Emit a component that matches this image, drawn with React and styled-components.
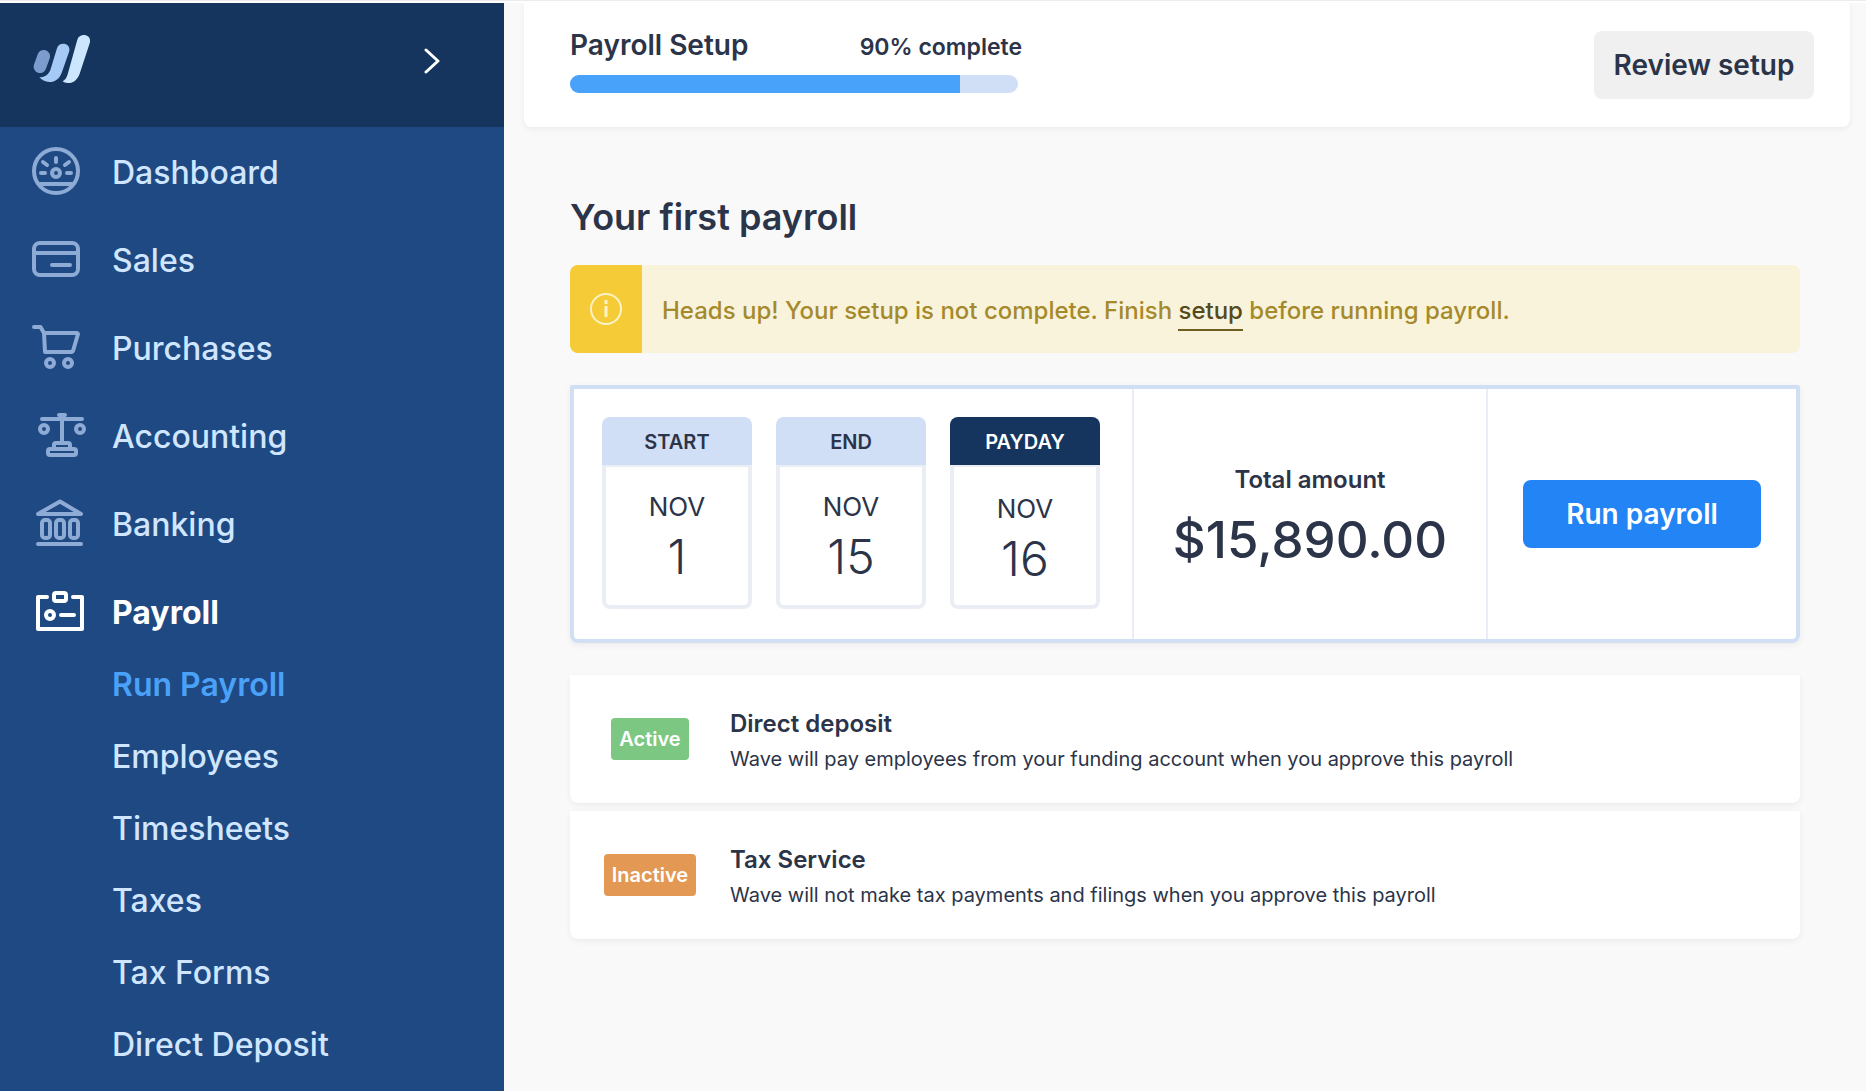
import React from 'react'
import styled, { createGlobalStyle } from 'styled-components'

const GlobalStyle = createGlobalStyle`
    * {
        box-sizing: border-box;
    }
    body {
        margin: 0;
        background: #f9f9f9;
        color: #2b3448;
        font-family: Inter, 'Liberation Sans', sans-serif;
    }
    h1, h2, p, ul {
        margin: 0;
        padding: 0;
    }
    ul {
        list-style: none;
    }
    button {
        font-family: inherit;
        cursor: pointer;
    }
`

const Page = styled.div`
    display: flex;
    min-height: 100vh;
    border-top: 1px solid #ececee;
    padding-top: 2px;
    background: linear-gradient(#ffffff 2px, #f9f9f9 2px);
`

const Sidebar = styled.aside`
    flex: 0 0 504px;
    background: #1f4983;
`

const SidebarHeader = styled.div`
    display: flex;
    align-items: center;
    justify-content: space-between;
    padding: 29px 64px 37px 32px;
    background: #15355f;
`

const ExpandButton = styled.button`
    display: flex;
    padding: 0;
    border: 0;
    background: none;
    color: #ffffff;
`

const Nav = styled.nav`
    padding-top: 1px;
`

const NavLink = styled.a`
    display: flex;
    align-items: center;
    gap: 24px;
    height: 88px;
    padding-left: 32px;
    font-size: 32px;
    font-weight: ${props => (props.$active ? 700 : 500)};
    color: ${props => (props.$active ? '#ffffff' : '#d0e6ff')};
    text-decoration: none;
    svg {
        color: ${props => (props.$active ? '#ffffff' : '#8eabd6')};
    }
`

const SubLink = styled.a`
    display: flex;
    align-items: center;
    height: 72px;
    padding-left: 112px;
    font-size: 32px;
    font-weight: ${props => (props.$active ? 600 : 500)};
    color: ${props => (props.$active ? '#4aa2f8' : '#d0e6ff')};
    text-decoration: none;
`

const SubNav = styled.ul`
    margin-top: -8px;
`

const Main = styled.main`
    flex: 1;
    min-width: 0;
`

const SetupBar = styled.header`
    display: flex;
    align-items: flex-start;
    justify-content: space-between;
    margin: 0 16px 0 20px;
    padding: 28px 36px 28px 46px;
    background: #ffffff;
    border-radius: 0 0 8px 8px;
    box-shadow: 0 2px 6px rgba(0, 0, 0, 0.06);
`

const SetupProgress = styled.div`
    width: 452px;
`

const SetupText = styled.div`
    display: flex;
    align-items: baseline;
    justify-content: space-between;
    height: 28px;
    margin-bottom: 16px;
    line-height: 28px;
`

const SetupTitle = styled.h2`
    font-size: 28px;
    font-weight: 600;
`

const SetupPercent = styled.span`
    font-size: 23px;
    font-weight: 600;
`

const Track = styled.div`
    width: 448px;
    height: 18px;
    border-radius: 9px;
    overflow: hidden;
    background: #d0dff6;
`

const Fill = styled.div`
    height: 100%;
    background: #48a2f9;
`

const Button = styled.button`
    height: 68px;
    padding: 0;
    width: ${props => (props.$primary ? '238px' : '220px')};
    border: 0;
    border-radius: 8px;
    background: ${props => (props.$primary ? '#2284f5' : '#f0f0f1')};
    color: ${props => (props.$primary ? '#ffffff' : '#2b3448')};
    font-size: 28px;
    font-weight: 600;
`

const Content = styled.div`
    padding: 66px 66px 40px;
`

const Title = styled.h1`
    font-size: 36px;
    font-weight: 600;
    line-height: 48px;
    margin-bottom: 24px;
`

const Alert = styled.div`
    display: flex;
    height: 88px;
    margin-bottom: 32px;
    border-radius: 8px;
    overflow: hidden;
    background: #f9f3dc;
`

const AlertIcon = styled.div`
    display: flex;
    align-items: center;
    justify-content: center;
    width: 72px;
    background: #f5cb37;
`

const AlertText = styled.p`
    padding-left: 20px;
    font-size: 24px;
    font-weight: 500;
    line-height: 92px;
    color: #a58a2c;
    a {
        padding-bottom: 4px;
        border-bottom: 2px solid #6e5e20;
        color: #564a1a;
        text-decoration: none;
    }
`

const PayrollCard = styled.section`
    display: grid;
    grid-template-columns: 560px 354px 1fr;
    margin-bottom: 32px;
    border: 4px solid #d0dff3;
    border-radius: 2px 2px 8px 8px;
    background: #ffffff;
    box-shadow: 0 2px 6px rgba(0, 0, 0, 0.06);
`

const Cell = styled.div`
    display: flex;
    flex-direction: column;
    align-items: center;
    justify-content: center;
    border-right: 2px solid #e9edf5;
    &:last-child {
        border-right: 0;
    }
`

const Dates = styled(Cell)`
    flex-direction: row;
    justify-content: flex-start;
    gap: 24px;
    padding: 28px 28px 30px;
`

const Total = styled(Cell)`
    padding-top: 12px;
`

const DateCard = styled.div`
    width: 150px;
    height: 192px;
    text-align: center;
`

const DateHead = styled.div`
    padding-top: 2px;
    border-radius: 8px 8px 0 0;
    background: ${props => (props.$dark ? '#15355f' : '#d0dff6')};
    color: ${props => (props.$dark ? '#ffffff' : '#2b3448')};
    font-size: 20px;
    font-weight: 600;
    line-height: 46px;
`

const DateBody = styled.div`
    height: 144px;
    padding-top: ${props => (props.$dark ? '22px' : '20px')};
    border: 4px solid #eaedf4;
    border-top-width: 2px;
    border-radius: 0 0 8px 8px;
`

const Month = styled.div`
    font-size: 26px;
    line-height: 40px;
`

const Day = styled.div`
    font-size: 48px;
    font-weight: 300;
    line-height: 60px;
`

const TotalLabel = styled.div`
    font-size: 24px;
    font-weight: 600;
    line-height: 40px;
`

const TotalAmount = styled.div`
    font-size: 51px;
    font-weight: 500;
    line-height: 80px;
`

const Services = styled.ul`
    display: flex;
    flex-direction: column;
    gap: 8px;
`

const Service = styled.li`
    display: flex;
    align-items: center;
    height: 128px;
    border-radius: 0 0 8px 8px;
    background: #ffffff;
    box-shadow: 0 2px 6px rgba(0, 0, 0, 0.06);
`

const BadgeBox = styled.div`
    display: flex;
    justify-content: center;
    width: 160px;
`

const Badge = styled.span`
    padding: 0 8px;
    border-radius: 4px;
    background: ${props => (props.$on ? '#7cc883' : '#e39853')};
    color: #ffffff;
    font-size: 20px;
    font-weight: 600;
    line-height: 42px;
`

const ServiceText = styled.div`
    padding-top: 4px;
`

const ServiceName = styled.h2`
    font-size: 24px;
    font-weight: 600;
    line-height: 36px;
`

const ServiceNote = styled.p`
    font-size: 20px;
    line-height: 34px;
`

const Icon = ({ children }) => (
    <svg width="56" height="56" viewBox="0 0 56 56" fill="none" stroke="currentColor"
        strokeWidth="4" strokeLinecap="round" strokeLinejoin="round" aria-hidden="true">
        {children}
    </svg>
)

const Logo = () => (
    <svg width="60" height="58" viewBox="96 96 180 174" aria-hidden="true">
        <path d="M131 169L120 200" stroke="#7c9ccd" strokeWidth="38" strokeLinecap="round" />
        <path fill="#a6caf6" d="M171 145C177 124 212 128 208 153L186 216C178 240 161 247 148 246C135 245 125 240 118 232C136 232 148 221 152 207Z" />
        <path fill="#cce6fd" d="M232 119C238 98 274 101 270 127L239 221C232 240 219 250 203 249C197 249 192 247 188 244C196 240 200 233 203 223Z" />
    </svg>
)

const nav = [
    {
        label: 'Dashboard',
        icon: (
            <Icon>
                <circle cx="24" cy="27" r="22" />
                <circle cx="24" cy="29" r="4" />
                <path d="M24 14v4M9 29h4M35 29h4M11 18l4 3M37 18l-4 3M7 40h34" />
            </Icon>
        ),
    },
    {
        label: 'Sales',
        icon: (
            <Icon>
                <rect x="2" y="11" width="44" height="32" rx="6" />
                <path d="M2 21h44M20 33h18" />
            </Icon>
        ),
    },
    {
        label: 'Purchases',
        icon: (
            <Icon>
                <path d="M2 7h6.500l3.500 6h33l1 1l-5 17l-1.500 1H13L12 13" />
                <circle cx="18" cy="43" r="4" />
                <circle cx="36" cy="43" r="4" />
            </Icon>
        ),
    },
    {
        label: 'Accounting',
        icon: (
            <Icon>
                <path d="M10 11h40M27 7h6M30 8v26M22 40v-3q0-2 2-2h12q2 0 2 2v3" />
                <circle cx="12" cy="21" r="4" />
                <circle cx="48" cy="21" r="4" />
                <rect x="16" y="41" width="28" height="6" rx="2" />
            </Icon>
        ),
    },
    {
        label: 'Banking',
        icon: (
            <Icon>
                <path d="M6 18L28 5.500L49 18ZM6 48h43" />
                <rect x="10" y="24" width="8" height="18" rx="3" />
                <rect x="24" y="24" width="8" height="18" rx="3" />
                <rect x="38" y="24" width="8" height="18" rx="3" />
            </Icon>
        ),
    },
    {
        label: 'Payroll',
        active: true,
        icon: (
            <Icon>
                <path d="M15 13H6v32h44V13h-9M29 31h13" />
                <rect x="22" y="9" width="12" height="8" rx="2" />
                <circle cx="18" cy="31" r="4" />
            </Icon>
        ),
    },
]

const subNav = ['Run Payroll', 'Employees', 'Timesheets', 'Taxes', 'Tax Forms', 'Direct Deposit']

const dates = [
    { name: 'START', month: 'NOV', day: 1 },
    { name: 'END', month: 'NOV', day: 15 },
    { name: 'PAYDAY', month: 'NOV', day: 16, dark: true },
]

const services = [
    {
        on: true,
        status: 'Active',
        name: 'Direct deposit',
        note: 'Wave will pay employees from your funding account when you approve this payroll',
    },
    {
        on: false,
        status: 'Inactive',
        name: 'Tax Service',
        note: 'Wave will not make tax payments and filings when you approve this payroll',
    },
]

const SideNav = () => (
    <Sidebar>
        <SidebarHeader>
            <Logo />
            <ExpandButton aria-label="Switch business">
                <svg width="16" height="28" viewBox="0 0 16 28" fill="none" stroke="currentColor"
                    strokeWidth="3" strokeLinecap="round" strokeLinejoin="round">
                    <path d="M2 3l12 11L2 25" />
                </svg>
            </ExpandButton>
        </SidebarHeader>
        <Nav>
            <ul>
                {nav.map(item => (
                    <li key={item.label}>
                        <NavLink href="#" $active={item.active}>
                            {item.icon}
                            {item.label}
                        </NavLink>
                    </li>
                ))}
            </ul>
            <SubNav>
                {subNav.map((label, i) => (
                    <li key={label}>
                        <SubLink href="#" $active={i === 0}>{label}</SubLink>
                    </li>
                ))}
            </SubNav>
        </Nav>
    </Sidebar>
)

const Setup = ({ filled }) => (
    <SetupBar>
        <SetupProgress>
            <SetupText>
                <SetupTitle>Payroll Setup</SetupTitle>
                <SetupPercent>90% complete</SetupPercent>
            </SetupText>
            <Track>
                <Fill style={{ width: `${filled}%` }} />
            </Track>
        </SetupProgress>
        <Button>Review setup</Button>
    </SetupBar>
)

const App = () => {
    return (
        <Page>
            <GlobalStyle />
            <SideNav />
            <Main>
                <Setup filled={87} />
                <Content>
                    <Title>Your first payroll</Title>
                    <Alert>
                        <AlertIcon>
                            <svg width="32" height="32" viewBox="0 0 32 32" fill="none" stroke="#fdf3c8" aria-hidden="true">
                                <circle cx="16" cy="16" r="15" strokeWidth="2" />
                                <path d="M16 13v11M16 7v4" strokeWidth="3" />
                            </svg>
                        </AlertIcon>
                        <AlertText>
                            Heads up! Your setup is not complete. Finish <a href="#">setup</a> before running payroll.
                        </AlertText>
                    </Alert>
                    <PayrollCard>
                        <Dates>
                            {dates.map(date => (
                                <DateCard key={date.name}>
                                    <DateHead $dark={date.dark}>{date.name}</DateHead>
                                    <DateBody $dark={date.dark}>
                                        <Month>{date.month}</Month>
                                        <Day>{date.day}</Day>
                                    </DateBody>
                                </DateCard>
                            ))}
                        </Dates>
                        <Total>
                            <TotalLabel>Total amount</TotalLabel>
                            <TotalAmount>$15,890.00</TotalAmount>
                        </Total>
                        <Cell>
                            <Button $primary>Run payroll</Button>
                        </Cell>
                    </PayrollCard>
                    <Services>
                        {services.map(service => (
                            <Service key={service.name}>
                                <BadgeBox>
                                    <Badge $on={service.on}>{service.status}</Badge>
                                </BadgeBox>
                                <ServiceText>
                                    <ServiceName>{service.name}</ServiceName>
                                    <ServiceNote>{service.note}</ServiceNote>
                                </ServiceText>
                            </Service>
                        ))}
                    </Services>
                </Content>
            </Main>
        </Page>
    )
}

export default App
